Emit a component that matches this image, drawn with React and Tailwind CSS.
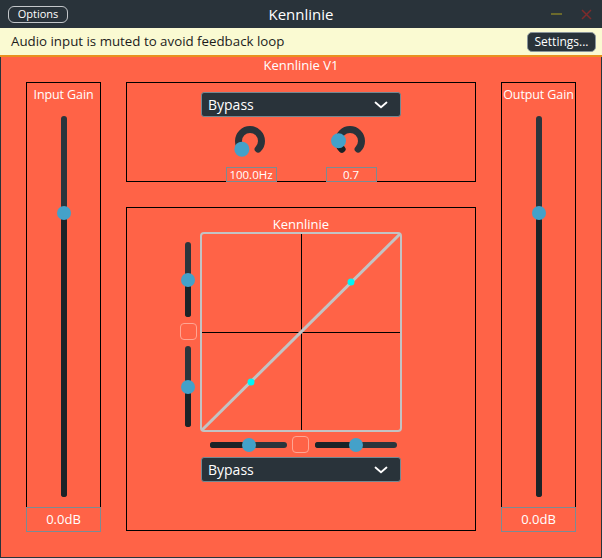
import React from 'react';

function VSlider({ size, pos }) {
  return (
    <div className={`relative w-[6px] rounded-full bg-[#2b353c] ${size}`}>
      <div
        className="absolute left-0 right-0 bottom-0 rounded-full bg-[#1b2327]"
        style={{ top: `${pos * 100}%` }}
      />
      <div
        className="absolute left-1/2 w-[14px] h-[14px] -ml-[7px] -mt-[7px] rounded-full bg-[#44a1c9]"
        style={{ top: `${pos * 100}%` }}
      />
    </div>
  );
}

function HSlider({ size, pos }) {
  return (
    <div className={`relative h-[6px] rounded-full bg-[#2b353c] ${size}`}>
      <div
        className="absolute top-0 bottom-0 left-0 rounded-full bg-[#1b2327]"
        style={{ width: `${pos * 100}%` }}
      />
      <div
        className="absolute top-1/2 w-[14px] h-[14px] -ml-[7px] -mt-[7px] rounded-full bg-[#44a1c9]"
        style={{ left: `${pos * 100}%` }}
      />
    </div>
  );
}

function Dropdown() {
  return (
    <div className="w-[200px] h-[25px] shrink-0 bg-[#29333a] border border-[#738892] rounded-[3px] flex items-center justify-between pl-[6px] pr-[12px]">
      <span className="text-[14px] leading-[18px]">Bypass</span>
      <svg width="14" height="8" viewBox="0 0 14 8">
        <path d="M1.5 1.5 L7 6.2 L12.5 1.5" stroke="#ffffff" strokeWidth="1.8" fill="none" strokeLinecap="round" />
      </svg>
    </div>
  );
}

function Knob({ value, label }) {
  // angles clockwise from top, -135 .. 135
  const cx = 19;
  const cy = 20;
  const r = 11.5;
  const pt = (deg) => {
    const a = (deg * Math.PI) / 180;
    return [cx + r * Math.sin(a), cy - r * Math.cos(a)];
  };
  const [sx, sy] = pt(-135);
  const [ex, ey] = pt(135);
  const ang = -135 + value * 270;
  const [vx, vy] = pt(ang);
  return (
    <div className="w-[51px] flex flex-col items-center">
      <svg width="40" height="40" viewBox="0 0 40 40">
        <path
          d={`M${sx} ${sy} A${r} ${r} 0 1 1 ${ex} ${ey}`}
          stroke="#29333a"
          strokeWidth="7"
          fill="none"
          strokeLinecap="round"
        />
        {value > 0 && (
          <path
            d={`M${sx} ${sy} A${r} ${r} 0 0 1 ${vx} ${vy}`}
            stroke="#1a2124"
            strokeWidth="7"
            fill="none"
            strokeLinecap="round"
          />
        )}
        <circle cx={vx} cy={vy} r="7.5" fill="#44a1c9" />
      </svg>
      <div className="mt-[6px] w-[51px] h-[15px] border border-[#7b8b93] flex items-center justify-center text-[11.5px] leading-[13px]">
        {label}
      </div>
    </div>
  );
}

function GainColumn({ title }) {
  return (
    <div className="w-[75px] h-[450px] shrink-0 flex flex-col">
      <div className="flex-1 border border-black border-b-0 flex flex-col items-center">
        <div className="h-[24px] leading-[24px] text-[12.5px] tracking-[-0.1px] whitespace-nowrap">{title}</div>
        <div className="mt-[9px]">
          <VSlider size="h-[381px]" pos={0.255} />
        </div>
      </div>
      <div className="h-[25px] border border-[#7b8b93] flex items-center justify-center text-[13px]">
        0.0dB
      </div>
    </div>
  );
}

function SmallBox() {
  return <div className="w-[17px] h-[17px] shrink-0 rounded-[4px] border border-[#ffa593]" />;
}

export default function App() {
  return (
    <div className="w-[602px] h-[558px] bg-[#29333a] flex flex-col text-white font-['Open_Sans',sans-serif]">
      <div className="h-[28px] grid grid-cols-[1fr_auto_1fr] items-center">
        <div className="pl-[8px]">
          <button className="w-[60px] h-[17px] border border-[#c3c7ca] rounded-[6px] text-[11px] leading-[14px] flex items-center justify-center">
            Options
          </button>
        </div>
        <div className="text-[15px] leading-[20px]">Kennlinie</div>
        <div className="flex items-center justify-end pr-[10px] gap-[19px]">
          <div className="w-[11px] h-[2px] bg-[#6b6a2c]" />
          <svg width="11" height="11" viewBox="0 0 11 11">
            <path d="M1 1 L10 10 M10 1 L1 10" stroke="#7e2b2b" strokeWidth="1.5" />
          </svg>
        </div>
      </div>

      <div className="h-[29px] bg-[#fafad2] border-b-2 border-[#e8901f] flex items-center justify-between pl-[11px] pr-[6px]">
        <span className="text-[13.3px] text-[#1c1c1c]">Audio input is muted to avoid feedback loop</span>
        <button className="w-[69px] h-[20px] rounded-[5px] bg-[#29333a] border border-[#8a959b] text-[12px] leading-[16px] text-white flex items-center justify-center">
          Settings...
        </button>
      </div>

      <div className="flex-1 mx-px mb-px bg-[#ff6347] flex flex-col">
        <div className="h-[25px] text-center text-[13px] leading-[16px]">Kennlinie V1</div>

        <div className="flex items-start px-[25px] gap-[25px]">
          <GainColumn title="Input Gain" />

          <div className="w-[350px] shrink-0 flex flex-col gap-[25px]">
            <div className="h-[100px] border border-black flex flex-col items-center pt-[9px]">
              <Dropdown />
              <div className="mt-[4px] flex gap-[49px]">
                <Knob value={0} label="100.0Hz" />
                <Knob value={0.17} label="0.7" />
              </div>
            </div>

            <div className="h-[324px] border border-black flex flex-col items-center">
              <div className="h-[24px] flex items-end text-[13px] leading-[16px]">Kennlinie</div>
              <div className="flex">
                <div className="w-[24px] flex flex-col items-center pt-[10px]">
                  <VSlider size="h-[75px]" pos={0.5} />
                  <div className="mt-[6px]">
                    <SmallBox />
                  </div>
                  <div className="mt-[6px]">
                    <VSlider size="h-[81px]" pos={0.5} />
                  </div>
                </div>
                <div className="w-[202px] h-[200px] border-2 border-[#c3c3c3] rounded-[4px]">
                  <svg width="198" height="196" viewBox="0 0 198 196" className="block">
                    <line x1="99.5" y1="0" x2="99.5" y2="196" stroke="#000" strokeWidth="1" />
                    <line x1="0" y1="98.5" x2="198" y2="98.5" stroke="#000" strokeWidth="1" />
                    <line x1="0" y1="196" x2="198" y2="0" stroke="#c3c3c3" strokeWidth="3" />
                    <circle cx="149" cy="48" r="3.5" fill="#00f5f5" />
                    <circle cx="49" cy="148" r="3.5" fill="#00f5f5" />
                  </svg>
                </div>
                <div className="w-[24px]" />
              </div>
              <div className="self-start ml-[83px] mt-[4px] h-[17px] flex items-center">
                <HSlider size="w-[77px]" pos={0.5} />
                <div className="ml-[5px]">
                  <SmallBox />
                </div>
                <div className="ml-[6px]">
                  <HSlider size="w-[82px]" pos={0.5} />
                </div>
              </div>
              <div className="mt-[4px]">
                <Dropdown />
              </div>
            </div>
          </div>

          <GainColumn title="Output Gain" />
        </div>
      </div>
    </div>
  );
}
